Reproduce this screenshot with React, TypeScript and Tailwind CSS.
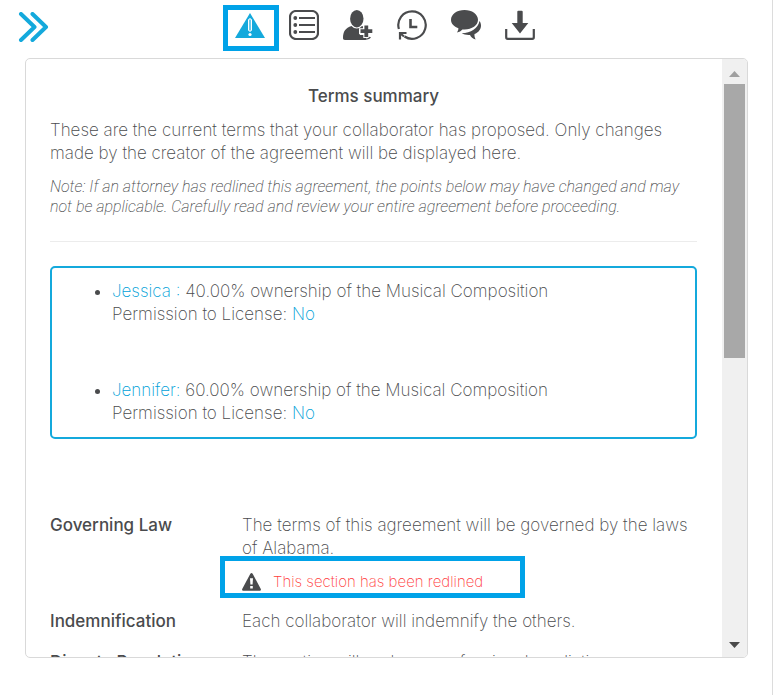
import type { ReactNode } from "react";

interface Collaborator {
  name: string;
  share: string;
  canLicense: string;
}

interface Term {
  label: string;
  text: string;
  redlined?: boolean;
}

const collaborators: Collaborator[] = [
  { name: "Jessica :", share: "40.00%", canLicense: "No" },
  { name: "Jennifer:", share: "60.00%", canLicense: "No" },
];

const terms: Term[] = [
  {
    label: "Governing Law",
    text: "The terms of this agreement will be governed by the laws of Alabama.",
    redlined: true,
  },
  { label: "Indemnification", text: "Each collaborator will indemnify the others." },
  { label: "Dispute Resolution", text: "The parties will undergo professional mediation." },
];

function ToolButton({ label, children }: { label: string; children: ReactNode }) {
  return (
    <button type="button" aria-label={label} className="mt-[5px] size-[30px] cursor-pointer text-[#4a4b4d]">
      <svg viewBox="0 0 30 30" className="size-full" fill="currentColor" aria-hidden="true">
        {children}
      </svg>
    </button>
  );
}

function Toolbar() {
  return (
    <header className="grid grid-cols-[1fr_auto_1fr] items-center pt-[5px] pr-[33px] pl-[18px]">
      <button type="button" aria-label="Collapse panel" className="w-8 cursor-pointer text-[#14a9dc]">
        <svg
          viewBox="0 0 32 32"
          className="size-8"
          fill="none"
          stroke="currentColor"
          strokeWidth="4"
          strokeLinecap="round"
          strokeLinejoin="round"
          aria-hidden="true"
        >
          <path d="M3 2l13.500 13L3 28M14.500 2L28 15 14.500 28" />
        </svg>
      </button>

      <div className="flex items-start gap-6">
        <button
          type="button"
          aria-label="Terms summary"
          className="-mr-[14px] flex h-[46px] w-14 cursor-pointer items-start justify-center border-5 border-[#00a2e8] pt-[3px] pr-0.5 text-[#14a9dc]"
        >
          <svg viewBox="0 0 30 26" className="h-[26px] w-[30px] shrink-0" aria-hidden="true">
            <path d="M15 0L30 25H0z" fill="currentColor" />
            <path
              d="M13.500 7c0-1.600 3-1.600 3 0v10c0 1.600-3 1.600-3 0z"
              fill="#6cc9ea"
              stroke="#fff"
              strokeWidth="1"
            />
            <circle cx="15" cy="21.500" r="1.600" fill="#fff" />
          </svg>
        </button>

        <ToolButton label="Full agreement">
          <rect x="1" y="1" width="28" height="28" rx="6" fill="none" stroke="currentColor" strokeWidth="2.200" />
          <circle cx="6.300" cy="8" r="1.900" />
          <circle cx="6.300" cy="15" r="1.900" />
          <circle cx="6.300" cy="22" r="1.900" />
          <path d="M10 8h16M10 15h16M10 22h16" stroke="currentColor" strokeWidth="2.200" />
        </ToolButton>

        <ToolButton label="Add collaborator">
          <ellipse cx="13.800" cy="8.700" rx="6.700" ry="8.700" />
          <path d="M8.500 16c1.500 1.700 3.300 2.500 5.300 2.500s3.700-.8 5.200-2.500l1 .5V19h-3v6h6v4.500c-.7.400-1.500.5-3 .5H2c-1.500 0-2-.8-2-2 0-6.500 2.500-10 8.500-12z" />
          <path d="M23.300 13.500v14.500M16 21.200h14" stroke="#fff" strokeWidth="6" />
          <path d="M23.300 15.500v11.500M17.500 21.200h11.800" stroke="currentColor" strokeWidth="3.800" />
          <path d="M20 29.300c4.500 0 6.300-.2 7.300-2.300" fill="none" stroke="currentColor" strokeWidth="1.400" />
        </ToolButton>

        <ToolButton label="History">
          <path
            d="M1.900 19A13.700 13.700 0 1 1 7.500 26.500"
            fill="none"
            stroke="currentColor"
            strokeWidth="2.200"
          />
          <path d="M9.500 23H3v6.500M3.500 23.500l3.500 3" fill="none" stroke="currentColor" strokeWidth="2.200" />
          <path d="M13.500 9v8h6.800" fill="none" stroke="currentColor" strokeWidth="2.600" />
        </ToolButton>

        <ToolButton label="Comments">
          <path d="M13.500 0C21 0 27 4.200 27 9.800s-6 9.700-13.500 9.700c-.8 0-1.400 0-2.100-.1-1.400 1.600-3 2.500-5.400 3 1-1.500 1.400-2.800 1.400-4.100C2.800 16.700 0 13.600 0 9.800 0 4.200 6 0 13.500 0z" />
          <path d="M28.500 11c1 1.400 1.500 3 1.500 4.800 0 3.500-2.400 6.700-6.500 8.300-.2 1.800.2 3.500 1.100 5.300-2.800-.8-4.700-2.300-5.600-4.500-3.300.2-6-.3-8.300-1.600C20 23 27 18.500 28.500 11z" />
        </ToolButton>

        <ToolButton label="Download">
          <path d="M12.300 1.800q0-1 1-1h3.400q1 0 1 1V13h5.600L15 23.500 6.700 13h5.600z" />
          <path
            d="M1.200 19v8.300q0 1.500 1.500 1.500h24.600q1.500 0 1.500-1.500V19"
            fill="none"
            stroke="currentColor"
            strokeWidth="2.200"
          />
        </ToolButton>
      </div>
    </header>
  );
}

function RedlinedNotice() {
  return (
    <div className="-mt-1 -mb-1.5 -ml-[22px] flex h-[42px] w-[305px] items-center gap-3 border-5 border-[#00a2e8] pt-[9px] pl-[17px]">
      <svg viewBox="0 0 19 18" className="h-[18px] w-[19px]" aria-hidden="true">
        <path
          d="M8.200.9q1.300-1.600 2.600 0l8 15.100q.5 1.500-1 1.700H1.200Q-.3 17.500.2 16z"
          fill="#4a4b4d"
        />
        <path d="M8 5.300h3l-.4 6.200H8.400zM8.200 13h2.600v2.500H8.200z" fill="#fff" />
      </svg>
      <p className="text-[15px] leading-5 text-[#ff3c3c]">This section has been redlined</p>
    </div>
  );
}

// Scroll track with arrows at both ends
function ScrollTrack() {
  return (
    <div className="flex w-[25px] shrink-0 flex-col items-center bg-[#f0f0f0]" aria-hidden="true">
      <div className="flex h-[25px] items-center pt-1">
        <svg viewBox="0 0 11 6" className="h-[6px] w-[11px]">
          <path d="M5.500 0L11 6H0z" fill="#a0a0a0" />
        </svg>
      </div>
      <div className="flex w-[21px] flex-1 flex-col">
        <div className="h-1/2 bg-[#a8a8a8]" />
      </div>
      <div className="flex h-[25px] items-center">
        <svg viewBox="0 0 11 6" className="h-[6px] w-[11px]">
          <path d="M0 0h11L5.500 6z" fill="#4a4a4a" />
        </svg>
      </div>
    </div>
  );
}

export default function App() {
  return (
    <div className="h-screen bg-white pr-[10px] font-['Inter',sans-serif] text-[17px] leading-[23px] font-extralight text-[#4a4b4d]">
      <div className="flex h-full flex-col border-r border-[#dcdcdc] pb-[37px]">
        <Toolbar />

        <main className="mt-[7px] mr-6 ml-[25px] flex min-h-0 flex-1 overflow-hidden rounded-[5px] border border-[#d9d9d9]">
          <div className="min-w-0 flex-1 overflow-hidden pt-[26px] pr-[25px] pl-6">
            <h1 className="text-center font-medium">Terms summary</h1>
            <p className="mt-[11px]">
              These are the current terms that your collaborator has proposed. Only changes made by the
              creator of the agreement will be displayed here.
            </p>
            <p className="mt-3 font-['Roboto',sans-serif] text-[16px] leading-5 font-extralight italic">
              Note: If an attorney has redlined this agreement, the points below may have changed and may
              not be applicable. Carefully read and review your entire agreement before proceeding.
            </p>
            <hr className="mt-6 border-[#ececec]" />

            <ul className="mt-6 list-disc space-y-[53px] rounded-[5px] border-2 border-[#14a9dc] pt-3 pb-3 pl-[60px]">
              {collaborators.map((person) => (
                <li key={person.name}>
                  <span className="text-[#009fd8]">{person.name}</span> {person.share} ownership of the
                  Musical Composition
                  <br />
                  Permission to License: <span className="text-[#009fd8]">{person.canLicense}</span>
                </li>
              ))}
            </ul>

            <dl className="mt-[75px] space-y-[18px]">
              {terms.map((term) => (
                <div key={term.label} className="flex">
                  <dt className="w-48 shrink-0 font-medium">{term.label}</dt>
                  <dd className="min-w-0 flex-1">
                    <p>{term.text}</p>
                    {term.redlined && <RedlinedNotice />}
                  </dd>
                </div>
              ))}
            </dl>
          </div>
          <ScrollTrack />
        </main>
      </div>
    </div>
  );
}
